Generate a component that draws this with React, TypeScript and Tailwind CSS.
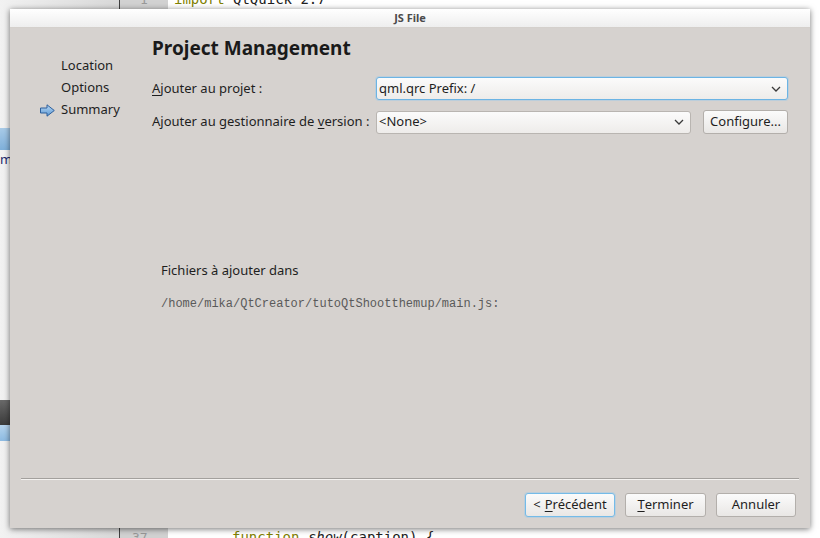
import { ChevronDown } from "lucide-react";

const ui = "font-['Noto_Sans',sans-serif]";

function Chevron() {
  return (
    <svg width="10" height="6" viewBox="0 0 10 6" className="shrink-0">
      <path d="M1 1 L5 5 L9 1" fill="none" stroke="#3a3a3a" strokeWidth="1.3" />
    </svg>
  );
}

function Combo({ text, focused, className }: { text: string; focused?: boolean; className?: string }) {
  return (
    <div
      className={`flex h-[23px] items-center justify-between rounded-[3px] border bg-gradient-to-b from-[#fbfbfb] to-[#eeecea] pl-[2px] pr-[6px] text-[13px] text-[#1e1e1e] ${
        focused ? "border-[#6cb4e4] shadow-[0_0_0_1px_rgba(140,200,240,0.35)]" : "border-[#b9b5b1]"
      } ${className ?? ""}`}
    >
      <span>{text}</span>
      <Chevron />
    </div>
  );
}

function Button({ children, focused, className }: { children: React.ReactNode; focused?: boolean; className?: string }) {
  return (
    <div
      className={`flex h-[24px] items-center justify-center rounded-[3px] border bg-gradient-to-b from-[#fbfbfb] to-[#e9e7e5] text-[13px] text-[#1e1e1e] ${
        focused ? "border-[#74bbe8] shadow-[0_0_0_1px_rgba(140,200,240,0.35)]" : "border-[#b3afab]"
      } ${className ?? ""}`}
    >
      {children}
    </div>
  );
}

function SummaryArrow() {
  return (
    <svg width="15" height="13" viewBox="0 0 15 13" className="shrink-0">
      <defs>
        <linearGradient id="ag" x1="0" y1="0" x2="0" y2="1">
          <stop offset="0" stopColor="#b9d9f4" />
          <stop offset="1" stopColor="#5b97d3" />
        </linearGradient>
      </defs>
      <polygon points="0.5,4 7,4 7,0.8 14.3,6.5 7,12.2 7,9 0.5,9" fill="url(#ag)" stroke="#2d5f9c" strokeWidth="1" strokeLinejoin="round" />
    </svg>
  );
}

export default function App() {
  void ChevronDown;
  return (
    <div className={`relative h-[538px] w-[820px] overflow-hidden bg-[#f6f6f6] ${ui}`}>
      {/* editor behind the dialog */}
      <div className="flex h-full">
        <div className="flex w-[119px] flex-col bg-gradient-to-r from-[#f2f2f2] to-[#d9d9d9]">
          <div className="h-[128px]" />
          <div className="h-[22px] bg-gradient-to-b from-[#a9cbe8] to-[#7fb0da]" />
          <div className="h-[18px] pl-[0px] text-[13px] leading-[18px] text-[#1e2a6e]">m</div>
          <div className="h-[232px]" />
          <div className="h-[25px] bg-gradient-to-b from-[#6a6a6a] to-[#3c3c3c]" />
          <div className="h-[16px] bg-gradient-to-b from-[#b6d4ee] to-[#8dbbe2]" />
          <div className="flex-1" />
        </div>
        <div className="flex w-[49px] flex-col justify-between border-l border-[#404040] bg-[#d2d2d2] font-['DejaVu_Sans_Mono',monospace] text-[13px] text-[#9a9a9a]">
          <div className="-mt-[9px] pl-[20px] leading-[17px]">1</div>
          <div className="-mb-[8px] pl-[12px] leading-[17px]">37 ⌄</div>
        </div>
        <div className="flex flex-1 flex-col justify-between bg-white font-['DejaVu_Sans_Mono',monospace] text-[14px]">
          <div className="-mt-[9px] pl-[6px] leading-[17px]">
            <span className="text-[#808000]">import</span> <span className="text-[#202020]">QtQuick 2.7</span>
          </div>
          <div className="-mb-[8px] pl-[64px] leading-[17px]">
            <span className="text-[#808000]">function</span> <span className="italic text-[#202020]">show</span>
            <span className="text-[#202020]">(caption) {"{"}</span>
          </div>
        </div>
      </div>

      {/* dialog window */}
      <div className="absolute left-[10px] top-[9px] flex h-[519px] w-[800px] flex-col shadow-[0_1px_6px_rgba(0,0,0,0.55)]">
        <div className="flex h-[19px] items-center justify-center border-b border-[#d4d0cc] bg-gradient-to-b from-[#ffffff] to-[#eeeeee] text-[11px] font-bold text-[#4b4b4b]">
          JS File
        </div>
        <div className="flex flex-1 flex-col bg-[#d6d2cf] text-[13px] text-[#1e1e1e]">
          <div className="flex flex-1">
            <div className="flex w-[142px] flex-col pl-[30px] pt-[27px]">
              <div className="flex h-[22px] items-center pl-[21px]">Location</div>
              <div className="flex h-[22px] items-center pl-[21px]">Options</div>
              <div className="flex h-[22px] items-center gap-[6px]">
                <SummaryArrow />
                <span>Summary</span>
              </div>
            </div>
            <div className="flex flex-1 flex-col pr-[22px] pt-[8px]">
              <div className="h-[24px] text-[19px] font-bold leading-[24px] text-[#1a1a1a]">Project Management</div>
              <div className="mt-[17px] flex items-center">
                <div className="w-[224px]">
                  <span className="underline underline-offset-2">A</span>jouter au projet :
                </div>
                <Combo text="qml.qrc Prefix: /" focused className="flex-1" />
              </div>
              <div className="mt-[10px] flex items-center">
                <div className="w-[224px]">
                  Ajouter au gestionnaire de <span className="underline underline-offset-2">v</span>ersion :
                </div>
                <Combo text="<None>" className="flex-1" />
                <Button className="ml-[12px] w-[85px]">Configure...</Button>
              </div>
              <div className="mt-[127px] pl-[9px] leading-[18px]">Fichiers à ajouter dans</div>
              <div className="mt-[17px] pl-[9px] font-['Liberation_Mono',monospace] text-[12px] leading-[16px] text-[#5a5a5a]">
                /home/mika/QtCreator/tutoQtShootthemup/main.js:
              </div>
            </div>
          </div>
          <div className="mx-[11px] h-[2px] border-t border-[#a3a09d] bg-[#f4f2f0]" />
          <div className="flex justify-end gap-[10px] pb-[11px] pr-[14px] pt-[13px]">
            <Button focused className="w-[90px]">
              &lt; <span className="ml-[4px] underline underline-offset-2">P</span>récédent
            </Button>
            <Button className="w-[81px]">
              <span className="underline underline-offset-2">T</span>erminer
            </Button>
            <Button className="w-[80px]">Annuler</Button>
          </div>
        </div>
      </div>
    </div>
  );
}
